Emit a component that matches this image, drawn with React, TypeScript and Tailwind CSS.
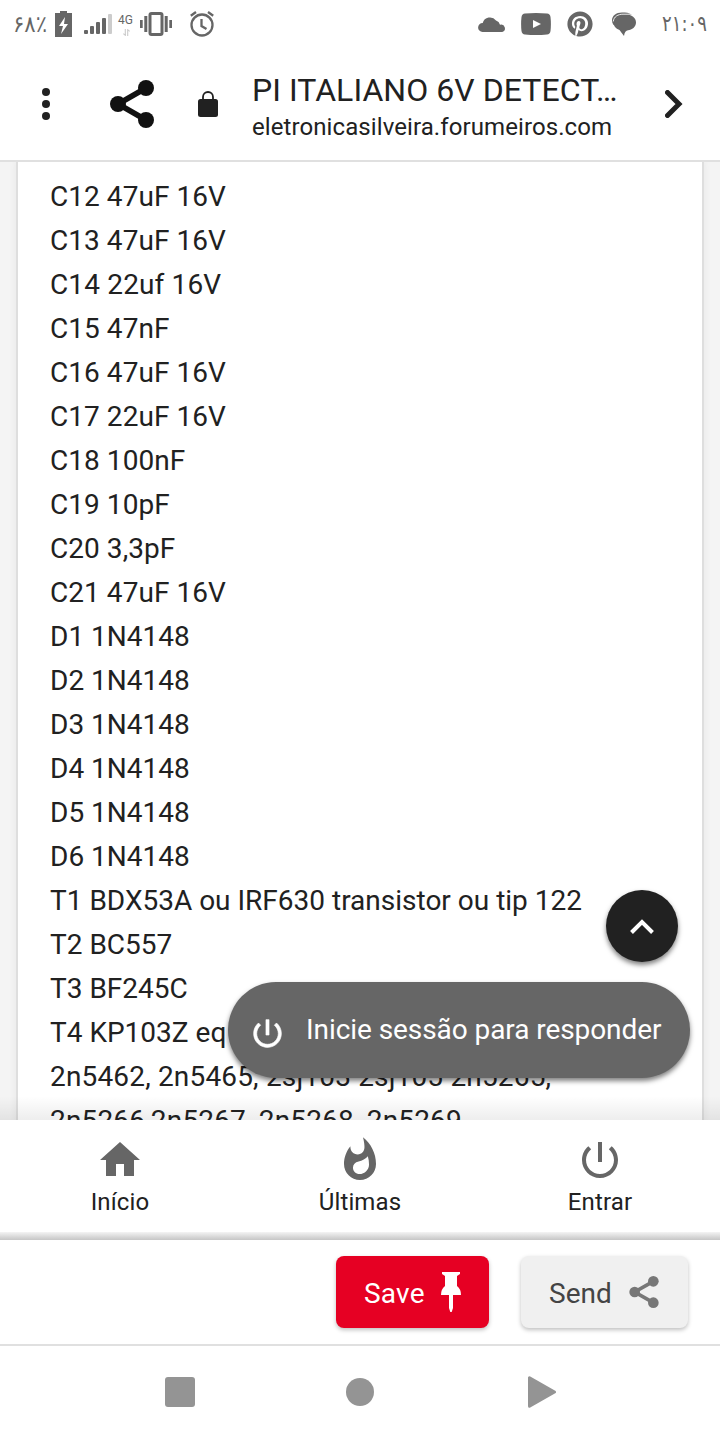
import { FaPinterest } from "react-icons/fa";

const parts = [
  "C12 47uF 16V",
  "C13 47uF 16V",
  "C14 22uf 16V",
  "C15 47nF",
  "C16 47uF 16V",
  "C17 22uF 16V",
  "C18 100nF",
  "C19 10pF",
  "C20 3,3pF",
  "C21 47uF 16V",
  "D1 1N4148",
  "D2 1N4148",
  "D3 1N4148",
  "D4 1N4148",
  "D5 1N4148",
  "D6 1N4148",
  "T1 BDX53A ou IRF630 transistor ou tip 122",
  "T2 BC557",
  "T3 BF245C",
  "T4 KP103Z eq",
  "2n5462, 2n5465, 2sj103 2sj105 2n5265,",
  "2n5266,2n5267, 2n5268, 2n5269",
];

const HOME = "M10 20v-6h4v6h5v-8h3L12 3 2 12h3v8z";
const FIRE =
  "M13.5.67s.74 2.65.74 4.8c0 2.06-1.35 3.73-3.41 3.73-2.07 0-3.63-1.67-3.63-3.73l.03-.36C5.21 7.51 4 10.62 4 14c0 4.42 3.58 8 8 8s8-3.58 8-8C20 8.61 17.41 3.8 13.5.67zM11.71 19c-1.78 0-3.22-1.4-3.22-3.14 0-1.62 1.05-2.76 2.81-3.12 1.77-.36 3.6-1.21 4.62-2.58.39 1.29.59 2.65.59 4.04 0 2.65-2.15 4.8-4.8 4.8z";
const POWER =
  "M13 3h-2v10h2V3zm4.83 2.17l-1.42 1.42C17.99 7.86 19 9.81 19 12c0 3.87-3.13 7-7 7s-7-3.13-7-7c0-2.19 1.01-4.14 2.58-5.42L6.17 5.17C4.23 6.82 3 9.26 3 12c0 4.97 4.03 9 9 9s9-4.03 9-9c0-2.74-1.23-5.18-3.17-6.83z";

const tabs = [
  { label: "Início", icon: HOME },
  { label: "Últimas", icon: FIRE },
  { label: "Entrar", icon: POWER },
];

function Icon({ d, className }: { d: string; className: string }) {
  return (
    <svg viewBox="0 0 24 24" fill="currentColor" className={className}>
      <path d={d} />
    </svg>
  );
}

function Share({ className }: { className: string }) {
  return (
    <svg viewBox="0 0 44 48" fill="currentColor" className={className}>
      <path d="M36 8L8 24l28 16" fill="none" stroke="currentColor" strokeWidth="5.500" />
      <circle cx="36" cy="8" r="8" />
      <circle cx="8" cy="24" r="8" />
      <circle cx="36" cy="40" r="8" />
    </svg>
  );
}

function StatusBar() {
  return (
    <div className="flex h-12 shrink-0 items-center justify-between pl-3 pr-3.5 text-[#666]">
      <div className="flex items-center">
        <span className="w-[35px] origin-left scale-x-[.92] whitespace-nowrap pl-px font-['DejaVu_Sans',sans-serif] text-[23px] leading-6">
          ۶۸٪
        </span>
        <svg viewBox="0 0 17 26" fill="currentColor" className="ml-2 h-[26px] w-[17px]">
          <path d="M5 0h7v2h5v24H0V2h5z" />
          <path d="M10 6L4 15h4l-2 8 7-10H9z" fill="#fff" />
        </svg>
        <svg viewBox="0 0 28 20" fill="currentColor" className="ml-3 h-5 w-7">
          <rect y="16" width="4" height="4" rx="1" />
          <rect x="6" y="12" width="4" height="8" rx="1" />
          <rect x="12" y="8" width="4" height="12" rx="1" />
          <rect x="18" y="4" width="4" height="16" rx="1" />
          <rect x="24" width="4" height="20" rx="1" fill="#ccc" />
        </svg>
        <div className="ml-1.5 flex h-6 w-[15px] flex-col items-start">
          <span className="font-[Roboto,sans-serif] text-[12px] leading-[17px]">4G</span>
          <svg viewBox="0 0 9 10" className="ml-1 h-[10px] w-[9px]" fill="none" stroke="#ccc" strokeWidth="1.6">
            <path d="M2.8 0v9L0 6.500M6.200 10V1L9 3.500" />
          </svg>
        </div>
        <svg viewBox="0 0 32 24" fill="currentColor" className="ml-[7px] h-6 w-8">
          <rect x="10" y="1.500" width="12" height="21" rx="1.500" fill="none" stroke="currentColor" strokeWidth="3" />
          <rect y="8" width="2.700" height="8" />
          <rect x="4.300" y="4" width="3" height="16" />
          <rect x="24.700" y="4" width="3" height="16" />
          <rect x="29.300" y="8" width="2.700" height="8" />
        </svg>
        <svg viewBox="0 0 24 26" fill="none" stroke="currentColor" strokeWidth="2.300" className="ml-[18px] h-[26px] w-6">
          <circle cx="12" cy="14" r="10.500" />
          <path d="M11.500 8v7l5 3M.8 4.800L6 1M23.200 4.800L18 1" />
        </svg>
      </div>
      <div className="flex items-center">
        <svg viewBox="0 0 28 16" fill="currentColor" className="mr-[15px] h-4 w-7">
          <path d="M4.500 16a4.500 4.500 0 0 1 .2-9A7.500 7.500 0 0 1 18 4.500a6 6 0 0 1 4 4.200A3.800 3.800 0 0 1 24.200 16z" />
        </svg>
        <svg viewBox="0 0 30 22" fill="currentColor" className="mr-4 h-[22px] w-[30px]">
          <path d="M4 .5Q15-.5 26 .5q3 .2 3.500 3.500.8 7 0 14-.5 3.300-3.500 3.500-11 1-22 0Q1 21.300.5 18q-.8-7 0-14Q1 .7 4 .5z" />
          <path d="M12 7l8 4-8 4z" fill="#fff" />
        </svg>
        <FaPinterest className="mr-[19px] size-[26px]" />
        <svg viewBox="0 0 24 24" fill="currentColor" className="mr-[26px] h-6 w-6">
          <path d="M10 .5C4 .5 0 4 0 8c0 2 .6 3.500 1.500 5L19.500 2.500C17 .8 14 .5 10 .5z" />
          <path d="M13 2.500c7 0 11 3.500 11 8s-4 7.500-8 7.700c-2 .1-3.500 2-4 5.800l-4.500-6C3.500 16.500 1.500 14 1.500 10.500c0-5 5-8 11.500-8z" />
          <path d="M1.200 9.500C2 4.500 6 2.200 11 2.200h8" fill="none" stroke="#fff" strokeWidth=".9" />
        </svg>
        <span className="w-11 origin-left scale-x-[.82] whitespace-nowrap font-['DejaVu_Sans',sans-serif] text-[22px] leading-6">
          ۲۱:۰۹
        </span>
      </div>
    </div>
  );
}

function AddressBar() {
  return (
    <header className="flex h-[114px] shrink-0 items-center border-b-2 border-[#e0e0e0] text-[#212121]">
      <div className="ml-[42px] flex flex-col gap-1">
        <span className="size-2 rounded-full bg-[#212121]" />
        <span className="size-2 rounded-full bg-[#212121]" />
        <span className="size-2 rounded-full bg-[#212121]" />
      </div>
      <Share className="ml-[60px] h-12 w-11 text-[#111]" />
      <svg viewBox="0 0 20 26" fill="currentColor" className="ml-11 h-[26px] w-5">
        <rect y="8" width="20" height="18" rx="2.500" />
        <path d="M5 9V6a5 5 0 0 1 10 0v3" fill="none" stroke="currentColor" strokeWidth="1.800" />
      </svg>
      <div className="ml-[34px] flex w-[370px] flex-col whitespace-nowrap pt-2">
        <span className="text-[32px] leading-[38px] tracking-[0.05px]">PI ITALIANO 6V DETECT…</span>
        <span className="text-2xl leading-9 tracking-[0.09px]">eletronicasilveira.forumeiros.com</span>
      </div>
      <svg viewBox="0 0 18 28" fill="none" stroke="currentColor" strokeWidth="5" className="ml-[43px] h-7 w-[18px]">
        <path d="M2.500 2.500L14 14 2.500 25.500" strokeLinecap="round" />
      </svg>
    </header>
  );
}

export default function App() {
  return (
    <div className="relative flex h-[1440px] w-[720px] flex-col overflow-hidden bg-white font-[Roboto,sans-serif] text-[#212121]">
      <StatusBar />
      <AddressBar />

      <main className="relative h-[958px] shrink-0 overflow-hidden bg-[#f4f4f4] px-[18px]">
        <div className="h-[1000px] bg-white px-8 pt-[13px] shadow-[0_0_0_2px_#dedede,0_0_8px_2px_rgba(0,0,0,0.06)]">
          {parts.map((line) => (
            <p
              key={line}
              className={`whitespace-nowrap text-[28px] leading-[44px] ${line.startsWith("2n") ? "tracking-[0.17px]" : line.includes("uf") ? "tracking-[0.15px]" : line.startsWith("C") ? "tracking-[0.05px]" : ""}`}
            >
              {line}
            </p>
          ))}
        </div>
        <div className="absolute inset-x-0 bottom-0 h-6 bg-linear-to-b from-transparent to-black/7" />
        <button className="absolute right-[42px] top-[728px] flex size-[72px] items-center justify-center rounded-full bg-[#212121] shadow-[0_3px_5px_rgba(0,0,0,0.5)]">
          <svg viewBox="0 0 24 16" fill="none" stroke="#fff" strokeWidth="4" className="mt-0.5 h-4 w-6">
            <path d="M1.500 13.500L12 3l10.500 10.500" />
          </svg>
        </button>
        <button className="absolute right-[30px] top-[820px] flex h-24 w-[462px] items-center whitespace-nowrap rounded-full bg-[#666] text-[28px] text-white shadow-[0_3px_5px_rgba(0,0,0,0.5)]">
          <Icon d={POWER} className="ml-[21px] mt-1.5 size-[37px] stroke-white stroke-[.4]" />
          <span className="ml-5 tracking-[-0.07px]">Inicie sessão para responder</span>
        </button>
      </main>

      <nav className="flex h-28 shrink-0">
        {tabs.map((tab) => (
          <div key={tab.label} className="flex flex-1 flex-col items-center pt-4">
            <Icon d={tab.icon} className="size-12 text-[#666]" />
            <span className="text-2xl leading-9 tracking-[0.15px]">{tab.label}</span>
          </div>
        ))}
      </nav>
      <div className="h-2 shrink-0 bg-linear-to-b from-[#f4f4f4] to-[#c6c6c6]" />

      <div className="flex h-[106px] shrink-0 justify-end gap-8 border-b-2 border-[#e0e0e0] pr-8 pt-4 text-[28px]">
        <button className="flex h-[72px] w-[153px] items-center rounded-lg bg-[#e60023] pl-7 text-white shadow-[0_2px_4px_rgba(0,0,0,0.25)]">
          <span className="w-[77px] pt-1 text-left tracking-[0.2px]">Save</span>
          <svg viewBox="0 0 20 40" fill="currentColor" className="h-10 w-5">
            <path d="M1 0h18v2l-3 2v10q4 3 4 9h-8v13l-1.300 4h-1.400L8 36V23H0q0-6 4-9V4L1 2z" />
          </svg>
        </button>
        <button className="flex h-[72px] w-[167px] items-center rounded-lg bg-[#f0f0f0] pl-7 text-[#444] shadow-[0_2px_4px_rgba(0,0,0,0.25)]">
          <span className="w-20 pt-1 text-left">Send</span>
          <Share className="h-8 w-[30px] text-[#777]" />
        </button>
      </div>

      <div className="flex flex-1 items-center justify-between pb-0.5 pl-[165px] pr-[164px] text-[#949494]">
        <span className="size-[30px] rounded-[3px] bg-[#949494]" />
        <span className="mr-[3px] size-7 rounded-full bg-[#949494]" />
        <svg viewBox="0 0 28 32" fill="currentColor" stroke="currentColor" strokeWidth="3" strokeLinejoin="round" className="h-8 w-7">
          <path d="M1.500 1.800v28.400L26.500 16z" />
        </svg>
      </div>
    </div>
  );
}
